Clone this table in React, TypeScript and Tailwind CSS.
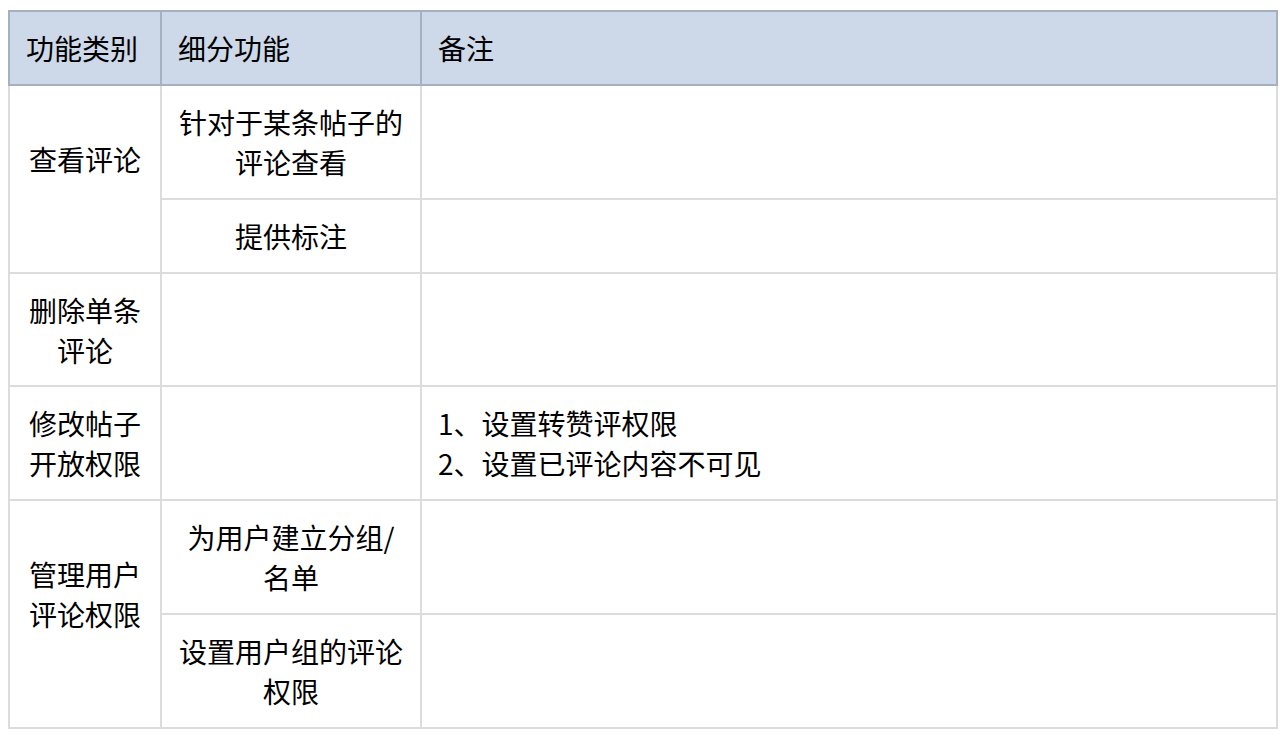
const font = { fontFamily: '"Noto Sans CJK SC", "Noto Sans", sans-serif' };

type Cell = {
  text: string[];
  className?: string;
};

function Lines({ text }: { text: string[] }) {
  return (
    <>
      {text.map((line, i) => (
        <span key={i} className="block">
          {line}
        </span>
      ))}
    </>
  );
}

const headers = ["功能类别", "细分功能", "备注"];

const centered = "items-center justify-center text-center";

const body: Cell[] = [
  { text: ["查看评论"], className: `row-span-2 pb-[40px] ${centered}` },
  { text: ["针对于某条帖子的", "评论查看"], className: centered },
  { text: [] },
  { text: ["提供标注"], className: centered },
  { text: [] },
  { text: ["删除单条", "评论"], className: centered },
  { text: [] },
  { text: [] },
  { text: ["修改帖子", "开放权限"], className: centered },
  { text: [] },
  { text: ["1、设置转赞评权限", "2、设置已评论内容不可见"], className: "items-start justify-center px-4 text-left" },
  { text: ["管理用户", "评论权限"], className: `row-span-2 pb-[40px] ${centered}` },
  { text: ["为用户建立分组/", "名单"], className: centered },
  { text: [] },
  { text: ["设置用户组的评论", "权限"], className: centered },
  { text: [] },
];

export default function App() {
  return (
    <div className="min-h-screen w-full bg-white pl-[8px] pt-[10px]" style={font}>
      <div className="w-[1270px] text-[28px] leading-[40px] text-black">
        <div className="grid grid-cols-[150px_258px_854px] gap-[2px] bg-[#a5b0c0] p-[2px]">
          {headers.map((h) => (
            <div key={h} className="flex h-[72px] items-center bg-[#cdd8e8] px-4">
              {h}
            </div>
          ))}
        </div>
        <div className="grid grid-cols-[150px_258px_854px] grid-rows-[112px_72px_111px_112px_112px_112px] gap-[2px] bg-[#dcdcdc] px-[2px] pb-[2px]">
          {body.map((c, i) => (
            <div key={i} className={`flex flex-col bg-white ${c.className ?? ""}`}>
              <Lines text={c.text} />
            </div>
          ))}
        </div>
      </div>
    </div>
  );
}
